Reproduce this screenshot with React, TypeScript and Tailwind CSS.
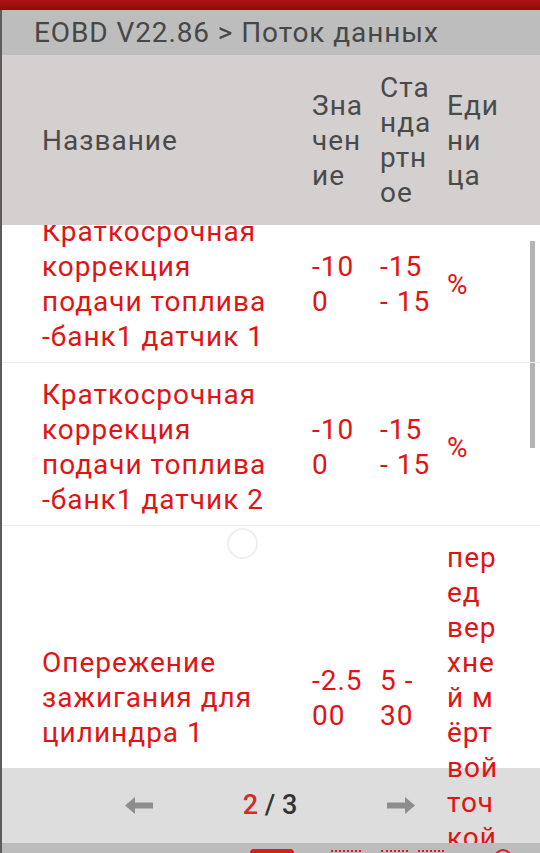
import React from 'react';

const font = { fontFamily: 'Roboto, "Noto Sans", sans-serif' };

type Row = { name: string; value: string[]; std: string[]; unit: string[] };

const rows: Row[] = [
  {
    name: 'Краткосрочная коррекция подачи топлива -банк1 датчик 1',
    value: ['-10', '0'],
    std: ['-15', '- 15'],
    unit: ['%'],
  },
  {
    name: 'Краткосрочная коррекция подачи топлива -банк1 датчик 2',
    value: ['-10', '0'],
    std: ['-15', '- 15'],
    unit: ['%'],
  },
  {
    name: 'Опережение зажигания для цилиндра 1',
    value: ['-2.5', '00'],
    std: ['5 -', '30'],
    // перед верхней мёртвой точкой, wrapped by the narrow column
    unit: ['пер', 'ед', 'вер', 'хне', 'й м', 'ёрт', 'вой', 'точ', 'кой'],
  },
];

function Lines({ items }: { items: string[] }) {
  return (
    <>
      {items.map((t, i) => (
        <div key={i} className="whitespace-pre">
          {t}
        </div>
      ))}
    </>
  );
}

function ArrowLeft() {
  return (
    <svg width="28" height="17" viewBox="0 0 28 17">
      <polygon points="0,8.5 10,0 10,17" fill="#8d8d8d" />
      <rect x="9" y="5.5" width="19" height="6" fill="#8d8d8d" />
    </svg>
  );
}

function ArrowRight() {
  return (
    <svg width="28" height="17" viewBox="0 0 28 17">
      <polygon points="28,8.5 18,0 18,17" fill="#8d8d8d" />
      <rect x="0" y="5.5" width="19" height="6" fill="#8d8d8d" />
    </svg>
  );
}

export default function App() {
  return (
    <div className="w-[540px] h-[853px] overflow-hidden flex flex-col bg-white relative" style={font}>
      {/* status strip */}
      <div className="h-[10px] shrink-0 bg-gradient-to-b from-[#b01212] to-[#8f0b0b]" />

      <div className="flex-1 min-h-0 flex flex-col border-l-2 border-[#5c5c5c]">
        {/* title */}
        <div className="h-[45px] shrink-0 bg-[#bdbdbd] flex items-center pl-[32px] text-[28px] tracking-[0.9px] text-[#474747] relative z-10">
          EOBD V22.86 &gt; Поток данных
        </div>

        {/* table header */}
        <div className="h-[170px] shrink-0 bg-[#d4d0d0] grid grid-cols-[310px_68px_67px_1fr] items-center text-[28px] tracking-[1px] leading-[35px] text-[#4a4a4a] relative z-10">
          <div className="pl-[40px]">Название</div>
          <div>
            <Lines items={['Зна', 'чен', 'ие']} />
          </div>
          <div>
            <Lines items={['Ста', 'нда', 'ртн', 'ое']} />
          </div>
          <div>
            <Lines items={['Еди', 'ни', 'ца']} />
          </div>
        </div>

        {/* list (scrolled, so the first row slides under the header) */}
        <div className="flex-1 min-h-0 bg-white">
          <div className="-mt-[25px] relative z-[5]">
            {rows.map((r, i) => (
              <div
                key={i}
                className="grid grid-cols-[310px_68px_67px_1fr] items-center pt-[14px] pb-[8px] border-b border-[#ececec] text-[28px] tracking-[1px] leading-[35px] text-[#e01414]"
              >
                <div className="pl-[40px] pr-[34px]">{r.name}</div>
                <div>
                  <Lines items={r.value} />
                </div>
                <div>
                  <Lines items={r.std} />
                </div>
                <div>
                  <Lines items={r.unit} />
                </div>
              </div>
            ))}
          </div>
        </div>

        {/* pager */}
        <div className="h-[75px] shrink-0 bg-[#dddddd] flex items-center justify-center gap-[88px] pr-[2px]">
          <ArrowLeft />
          <div className="text-[27px] font-medium w-[58px] text-center whitespace-nowrap">
            <span className="text-[#d52a2a]">2</span>
            <span className="text-[#333333]"> / 3</span>
          </div>
          <ArrowRight />
        </div>

        {/* bottom bar with clipped buttons */}
        <div className="h-[10px] shrink-0 bg-[#bcbcbc] relative z-10 flex items-end pl-[248px] overflow-hidden">
          <div className="w-[44px] h-[4px] rounded-t-[6px] bg-[#d62020]" />
          <div className="ml-[37px] w-[30px] h-[3px] border-t-2 border-dotted border-[#d62020]" />
          <div className="ml-[20px] w-[27px] h-[3px] border-t-2 border-dotted border-[#d62020]" />
          <div className="ml-[10px] w-[26px] h-[3px] border-t-2 border-dotted border-[#d62020]" />
          <div className="ml-[50px] w-[18px] h-[18px] mb-[-14px] rounded-full border-2 border-[#d62020]" />
        </div>
      </div>

      {/* scrollbar */}
      <div className="absolute left-[530px] top-[241px] w-[5px] h-[207px] bg-[#b4b4b4]" />

      {/* touch ripple ghost */}
      <div className="absolute left-[227px] top-[528px] w-[31px] h-[31px] rounded-full border-2 border-[#efefef]" />
    </div>
  );
}
